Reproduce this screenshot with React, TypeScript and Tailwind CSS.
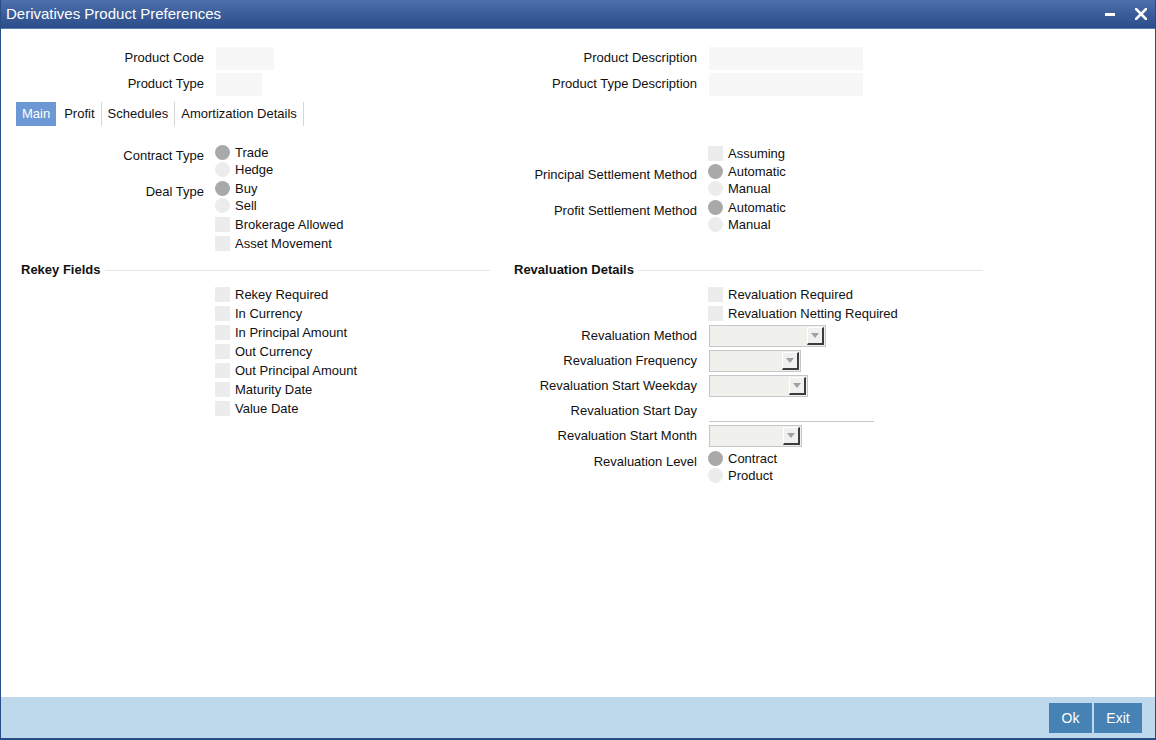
import type { ReactNode } from 'react'

const FONT = "font-['Liberation_Sans',Arial,sans-serif]"

function Radio({ label, checked }: { label: string; checked?: boolean }) {
  return (
    <div className="flex h-[17px] items-center gap-[5px]">
      <span
        className={`h-[15px] w-[15px] shrink-0 rounded-full ${
          checked ? 'bg-[#a9a9a9]' : 'bg-[#ececec]'
        }`}
      />
      <span className="leading-none">{label}</span>
    </div>
  )
}

function Check({ label }: { label: string }) {
  return (
    <div className="flex h-[19px] items-center gap-[5px]">
      <span className="h-[15px] w-[15px] shrink-0 bg-[#ececec]" />
      <span className="leading-none">{label}</span>
    </div>
  )
}

function Field({
  label,
  children,
  offset,
  labelWidth = 'w-[204px]',
}: {
  label?: string
  children: ReactNode
  offset?: boolean
  labelWidth?: string
}) {
  return (
    <div className="flex items-start">
      <div
        className={`${labelWidth} shrink-0 text-right leading-[17px] ${
          offset ? 'pt-[3px]' : ''
        }`}
      >
        {label}
      </div>
      <div className="ml-[11px] flex flex-col">{children}</div>
    </div>
  )
}

function Row({ label, children }: { label: string; children: ReactNode }) {
  return (
    <div className="flex h-[25px] items-center">
      <div className="w-[204px] shrink-0 text-right">{label}</div>
      <div className="ml-[12px] flex items-center">{children}</div>
    </div>
  )
}

function Select({ width }: { width: string }) {
  return (
    <div
      className={`flex h-[22px] items-center justify-end border border-[#c6c6c6] bg-[#f0f0ec] pr-[1px] ${width}`}
    >
      <div className="flex h-[18px] w-[17px] items-center justify-center border-t border-l border-r-2 border-b-2 border-t-white border-l-white border-r-[#3c3c3c] border-b-[#3c3c3c] bg-[#f0f0f0]">
        <svg width="8" height="5" viewBox="0 0 8 5">
          <path d="M0 0h8L4 5z" fill="#a0a0a0" />
        </svg>
      </div>
    </div>
  )
}

function SectionHeader({ title, width, pad }: { title: string; width: string; pad: string }) {
  return (
    <div className={`flex h-[18px] items-center pr-[3px] ${width} ${pad}`}>
      <span className="font-bold">{title}</span>
      <div className="ml-[4px] h-px flex-1 bg-[#e6e6e6]" />
    </div>
  )
}

export default function App() {
  return (
    <div
      className={`${FONT} flex h-[740px] w-[1156px] flex-col border-x border-b-2 border-[#2b4d86] bg-white text-[13px] text-[#111]`}
    >
      {/* title bar */}
      <div className="flex h-[29px] shrink-0 items-center justify-between border-b border-[#5a7fb5] bg-gradient-to-b from-[#4c70ab] to-[#2b4d8b] pl-[5px] pr-[8px] text-white">
        <span className="text-[15px]">Derivatives Product Preferences</span>
        <div className="flex items-center gap-[20px]">
          <svg width="10" height="3" viewBox="0 0 10 3">
            <rect width="10" height="3" fill="#fff" />
          </svg>
          <svg width="12" height="12" viewBox="0 0 12 12">
            <path
              d="M1 1L11 11M11 1L1 11"
              stroke="#fff"
              strokeWidth="2.6"
              strokeLinecap="square"
            />
          </svg>
        </div>
      </div>

      {/* content */}
      <div className="flex flex-1 flex-col pt-[16px]">
        <div className="flex">
          <div className="flex w-[492px] flex-col">
            <div className="flex h-[26px] items-center">
              <div className="w-[203px] text-right">Product Code</div>
              <div className="ml-[12px] h-[23px] w-[58px] bg-[#f7f7f7]" />
            </div>
            <div className="flex h-[26px] items-center">
              <div className="w-[203px] text-right">Product Type</div>
              <div className="ml-[12px] h-[23px] w-[46px] bg-[#f7f7f7]" />
            </div>
          </div>
          <div className="flex flex-col">
            <div className="flex h-[26px] items-center">
              <div className="w-[204px] text-right">Product Description</div>
              <div className="ml-[12px] h-[23px] w-[154px] bg-[#f7f7f7]" />
            </div>
            <div className="flex h-[26px] items-center">
              <div className="w-[204px] text-right">Product Type Description</div>
              <div className="ml-[12px] h-[23px] w-[154px] bg-[#f7f7f7]" />
            </div>
          </div>
        </div>

        {/* tabs */}
        <div className="mt-[5px] flex h-[24px] pl-[15px]">
          <div className="mr-[2px] flex items-center bg-[#6c98d5] px-[6px] text-white">
            Main
          </div>
          {['Profit', 'Schedules', 'Amortization Details'].map((t) => (
            <div
              key={t}
              className="flex items-center border-r border-[#d6d6d6] px-[6px]"
            >
              {t}
            </div>
          ))}
        </div>

        {/* main */}
        <div className="mt-[18px] flex items-start">
          <div className="flex w-[492px] flex-col">
            <Field label="Contract Type" offset labelWidth="w-[203px]">
              <Radio label="Trade" checked />
              <Radio label="Hedge" />
            </Field>
            <div className="mt-[2px]">
              <Field label="Deal Type" offset labelWidth="w-[203px]">
                <Radio label="Buy" checked />
                <Radio label="Sell" />
              </Field>
            </div>
            <div className="mt-[1px]">
              <Field labelWidth="w-[203px]">
                <Check label="Brokerage Allowed" />
                <Check label="Asset Movement" />
              </Field>
            </div>
          </div>
          <div className="flex flex-col">
            <Field>
              <Check label="Assuming" />
            </Field>
            <Field label="Principal Settlement Method" offset>
              <Radio label="Automatic" checked />
              <Radio label="Manual" />
            </Field>
            <div className="mt-[2px]">
              <Field label="Profit Settlement Method" offset>
                <Radio label="Automatic" checked />
                <Radio label="Manual" />
              </Field>
            </div>
          </div>
        </div>

        {/* sections */}
        <div className="mt-[8px] flex items-start">
          <div className="flex w-[492px] flex-col">
            <SectionHeader title="Rekey Fields" width="w-[492px]" pad="pl-[20px]" />
            <div className="mt-[6px]">
              <Field labelWidth="w-[203px]">
                {[
                  'Rekey Required',
                  'In Currency',
                  'In Principal Amount',
                  'Out Currency',
                  'Out Principal Amount',
                  'Maturity Date',
                  'Value Date',
                ].map((l) => (
                  <Check key={l} label={l} />
                ))}
              </Field>
            </div>
          </div>
          <div className="flex flex-col">
            <SectionHeader title="Revaluation Details" width="w-[493px]" pad="pl-[21px]" />
            <div className="mt-[6px] flex flex-col">
              <Field>
                <Check label="Revaluation Required" />
                <Check label="Revaluation Netting Required" />
              </Field>
              <Row label="Revaluation Method">
                <Select width="w-[117px]" />
              </Row>
              <Row label="Revaluation Frequency">
                <Select width="w-[92px]" />
              </Row>
              <Row label="Revaluation Start Weekday">
                <Select width="w-[99px]" />
              </Row>
              <Row label="Revaluation Start Day">
                <div className="h-[22px] w-[165px] border-b border-[#c8c8c8]" />
              </Row>
              <Row label="Revaluation Start Month">
                <Select width="w-[93px]" />
              </Row>
              <div className="mt-[2px]">
                <Field label="Revaluation Level" offset>
                  <Radio label="Contract" checked />
                  <Radio label="Product" />
                </Field>
              </div>
            </div>
          </div>
        </div>
      </div>

      {/* footer */}
      <div className="flex h-[41px] shrink-0 items-start justify-end gap-[2px] bg-[#bed9ec] pt-[6px] pr-[13px]">
        <button
          type="button"
          className="flex h-[30px] w-[43px] items-center justify-center bg-[#4682b4] text-[14px] text-white"
        >
          Ok
        </button>
        <button
          type="button"
          className="flex h-[30px] w-[48px] items-center justify-center bg-[#4682b4] text-[14px] text-white"
        >
          Exit
        </button>
      </div>
    </div>
  )
}
